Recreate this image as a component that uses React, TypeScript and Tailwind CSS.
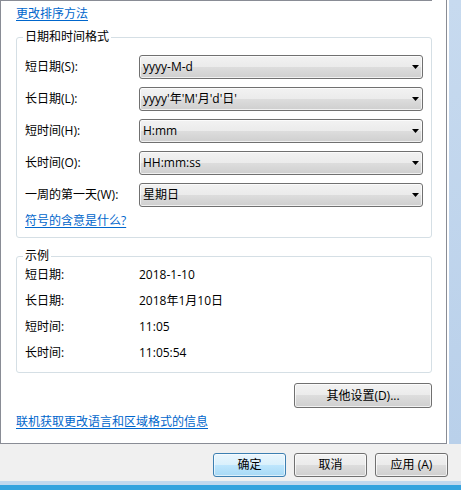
import React from "react";

// Regional format page: two group boxes (formats / examples) on a white tab
// panel, with the dialog's OK / Cancel / Apply strip underneath.
const FORMATS = [
  { label: "短日期(S):", value: "yyyy-M-d" },
  { label: "长日期(L):", value: "yyyy'年'M'月'd'日'" },
  { label: "短时间(H):", value: "H:mm" },
  { label: "长时间(O):", value: "HH:mm:ss" },
  { label: "一周的第一天(W):", value: "星期日" },
];

const EXAMPLES = [
  { label: "短日期:", value: "2018-1-10" },
  { label: "长日期:", value: "2018年1月10日" },
  { label: "短时间:", value: "11:05" },
  { label: "长时间:", value: "11:05:54" },
];

const BTN =
  "flex items-center justify-center rounded-[3px] border border-[#707070] bg-[linear-gradient(to_bottom,#f2f2f2_0%,#ebebeb_50%,#dddddd_50%,#cfcfcf_100%)] shadow-[inset_0_0_0_1px_rgba(255,255,255,0.7)] text-black";

function ComboBox({ value }: { value: string }) {
  return (
    <div className="flex h-6 w-[284px] items-center rounded-[3px] border border-[#707070] bg-[linear-gradient(to_bottom,#f2f2f2_0%,#ebebeb_50%,#dddddd_50%,#cfcfcf_100%)] pl-[3px] pr-[3px] shadow-[inset_0_0_0_1px_rgba(255,255,255,0.7)]">
      <span className="flex-1 whitespace-nowrap">{value}</span>
      <svg width="7" height="4" viewBox="0 0 7 4" aria-hidden="true">
        <polygon points="0,0 7,0 3.5,4" fill="#000" />
      </svg>
    </div>
  );
}

function Link({ children }: { children: React.ReactNode }) {
  return <a className="text-[#0066cc] underline underline-offset-2 leading-4 cursor-pointer">{children}</a>;
}

export default function App() {
  return (
    <div className="flex h-[490px] w-[461px] flex-col bg-[#f0f0f0] font-['Open_Sans','Noto_Sans_CJK_SC',sans-serif] text-[12px] text-black">
      <div className="flex">
        <div className="box-border h-[444px] w-[447px] border-b border-l border-r border-[#898c95] bg-white">
          <div className="h-px w-[431px] bg-[#898c95]" />
          <div className="pl-[15px]">
            <div className="pt-[5px] leading-4">
              <Link>更改排序方法</Link>
            </div>

            <fieldset className="mt-[7px] w-[416px] rounded-[3px] border border-[#d5dfe5] px-2 pt-[10px] pb-2">
              <legend className="-ml-[2px] px-[2px] leading-4">日期和时间格式</legend>
              <div className="flex flex-col gap-2">
                {FORMATS.map((f) => (
                  <div key={f.label} className="flex items-center">
                    <span className="w-[114px] whitespace-nowrap">{f.label}</span>
                    <ComboBox value={f.value} />
                  </div>
                ))}
              </div>
              <div className="mt-[6px] leading-4">
                <Link>符号的含意是什么?</Link>
              </div>
            </fieldset>

            <fieldset className="mt-[10px] w-[416px] rounded-[3px] border border-[#d5dfe5] px-2 pt-px pb-[9px]">
              <legend className="-ml-[2px] px-[2px] leading-4">示例</legend>
              <div className="flex flex-col gap-[6px]">
                {EXAMPLES.map((e) => (
                  <div key={e.label} className="flex h-5 items-center">
                    <span className="w-[114px]">{e.label}</span>
                    <span>{e.value}</span>
                  </div>
                ))}
              </div>
            </fieldset>

            <div className="mt-[10px] flex w-[416px] justify-end">
              <button className={`${BTN} h-[25px] w-[138px]`}>其他设置(D)...</button>
            </div>

            <div className="mt-[6px] leading-4">
              <Link>联机获取更改语言和区域格式的信息</Link>
            </div>
          </div>
        </div>
        <div className="h-[444px] flex-1 border-l-2 border-white bg-[linear-gradient(to_bottom,#c7daef,#b9d0ea)]" />
      </div>

      <div className="flex h-[37px] justify-end gap-2 pt-[9px] pr-[13px]">
        <button className="flex h-6 w-[73px] items-center justify-center rounded-[3px] border border-[#3c7fb1] bg-[linear-gradient(to_bottom,#eaf6fd_0%,#d9f0fc_50%,#bee6fd_50%,#a7d9f5_100%)] shadow-[inset_0_0_0_1px_rgba(255,255,255,0.6)]">
          确定
        </button>
        <button className={`${BTN} h-6 w-[73px]`}>取消</button>
        <button className={`${BTN} h-6 w-[73px]`}>应用 (A)</button>
      </div>
      <div className="h-[4px] bg-[#c2d8ee]" />
      <div className="h-[5px] bg-[#35a3de]" />
    </div>
  );
}
